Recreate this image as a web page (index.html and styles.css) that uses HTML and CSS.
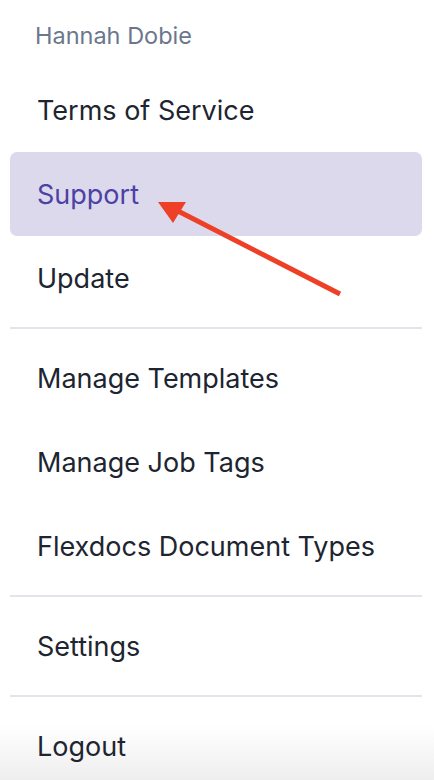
FILE: index.html
```html
<!DOCTYPE html>
<html>
<head>
<meta charset="utf-8">
<link rel="stylesheet" href="styles.css">
</head>
<body>
<nav class="menu">
  <div class="user">Hannah Dobie</div>
  <a class="item">Terms of Service</a>
  <a class="item active">Support</a>
  <a class="item">Update</a>
  <hr class="divider">
  <a class="item">Manage Templates</a>
  <a class="item">Manage Job Tags</a>
  <a class="item">Flexdocs Document Types</a>
  <hr class="divider">
  <a class="item">Settings</a>
  <hr class="divider">
  <a class="item">Logout</a>
</nav>
<svg class="arrow" width="434" height="780" viewBox="0 0 434 780">
  <line x1="340" y1="294" x2="176" y2="210" stroke="#ee4027" stroke-width="5"/>
  <polygon points="158,202 186,202 173,223" fill="#ee4027"/>
</svg>
</body>
</html>
```
FILE: styles.css
```css
html, body {
  margin: 0;
  padding: 0;
}
html {
  background: #ffffff;
}
body {
  width: 434px;
  height: 780px;
  overflow: hidden;
  position: relative;
  font-family: Inter, "Liberation Sans", sans-serif;
  background: linear-gradient(to bottom, #ffffff 0, #ffffff 725px, #eeeeee 780px);
}
.menu {
  display: flex;
  flex-direction: column;
  padding: 0 12px 0 10px;
}
.user {
  height: 68px;
  box-sizing: border-box;
  padding: 21px 0 0 25px;
  font-size: 23.5px;
  line-height: 30px;
  color: #6b778c;
}
.item {
  display: flex;
  align-items: center;
  height: 84px;
  padding-left: 27px;
  font-size: 27px;
  color: #1d2530;
  border-radius: 7px;
}
.item.active {
  background: #dcd9ec;
  color: #4c41a4;
}
.divider {
  border: 0;
  height: 2px;
  background: #e3e5ea;
  margin: 7px 0;
}
.arrow {
  position: absolute;
  left: 0;
  top: 0;
  pointer-events: none;
}
```
